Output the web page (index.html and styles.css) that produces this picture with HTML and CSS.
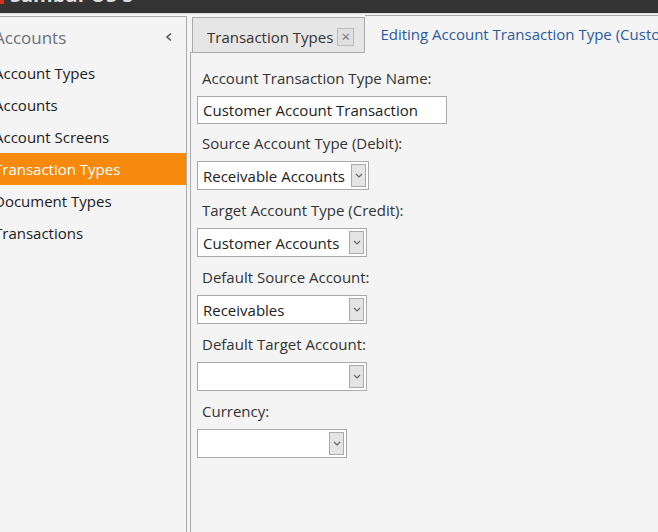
FILE: index.html
```html
<!DOCTYPE html>
<html lang="en">
<head>
  <meta charset="UTF-8">
  <title>Account Transaction Types</title>
  <link rel="stylesheet" href="styles.css">
</head>
<body>

  <div class="titlebar">
    <span class="logo"></span>
    <span class="title">SambaPOS 5</span>
  </div>

  <div class="main">
    <aside class="sidebar">
      <div class="side-head">
        <span>Accounts</span>
        <svg class="collapse" width="8" height="10" viewBox="0 0 8 10"><polyline points="6,1.5 2,5 6,8.5" fill="none" stroke="#555" stroke-width="1.6"/></svg>
      </div>
      <ul class="menu">
        <li>Account Types</li>
        <li>Accounts</li>
        <li>Account Screens</li>
        <li class="selected">Transaction Types</li>
        <li>Document Types</li>
        <li>Transactions</li>
      </ul>
    </aside>

    <section class="workspace">
      <div class="tabs">
        <div class="tab">Transaction Types <span class="close">&times;</span></div>
        <div class="tab active">Editing Account Transaction Type (Customer Account Transaction)</div>
      </div>

      <div class="panel">
        <form class="editor">
          <label>Account Transaction Type Name:</label>
          <div class="textbox">Customer Account Transaction</div>

          <label>Source Account Type (Debit):</label>
          <div class="combo debit"><span>Receivable Accounts</span><i class="drop"><svg width="8" height="5" viewBox="0 0 8 5"><polyline points="1,1 4,4 7,1" fill="none" stroke="#666" stroke-width="1.2"/></svg></i></div>

          <label>Target Account Type (Credit):</label>
          <div class="combo"><span>Customer Accounts</span><i class="drop"><svg width="8" height="5" viewBox="0 0 8 5"><polyline points="1,1 4,4 7,1" fill="none" stroke="#666" stroke-width="1.2"/></svg></i></div>

          <label>Default Source Account:</label>
          <div class="combo"><span>Receivables</span><i class="drop"><svg width="8" height="5" viewBox="0 0 8 5"><polyline points="1,1 4,4 7,1" fill="none" stroke="#666" stroke-width="1.2"/></svg></i></div>

          <label>Default Target Account:</label>
          <div class="combo"><span></span><i class="drop"><svg width="8" height="5" viewBox="0 0 8 5"><polyline points="1,1 4,4 7,1" fill="none" stroke="#666" stroke-width="1.2"/></svg></i></div>

          <label>Currency:</label>
          <div class="combo currency"><span></span><i class="drop"><svg width="8" height="5" viewBox="0 0 8 5"><polyline points="1,1 4,4 7,1" fill="none" stroke="#666" stroke-width="1.2"/></svg></i></div>
        </form>
      </div>
    </section>
  </div>

</body>
</html>
```

FILE: styles.css
```css
body {
  margin: 0;
  font-family: 'Open Sans', 'Noto Sans', sans-serif;
  background-color: #f4f4f4;
  color: #333;
  overflow: hidden;
}

.titlebar {
  height: 13px;
  background-color: #333;
  overflow: hidden;
  display: flex;
  align-items: flex-start;
  border-bottom: 1px solid #ddd;
}

.logo {
  width: 4px;
  height: 4px;
  background-color: #d8321e;
}

.title {
  margin-left: 6px;
  margin-top: -17px;
  font-size: 20px;
  line-height: 24px;
  font-weight: bold;
  color: #ddd;
}

.main {
  display: flex;
  margin-top: 1px;
  height: calc(100vh - 15px);
}

.sidebar {
  width: 197px;
  margin-left: -11px;
  margin-top: 1px;
  border-top: 1px solid #aaa;
  border-right: 1px solid #aaa;
  background-color: #f4f4f4;
}

.side-head {
  height: 40px;
  display: flex;
  align-items: center;
  justify-content: space-between;
  padding-left: 5px;
  padding-right: 13px;
  font-size: 17px;
  color: #6b6f7a;
}

.menu {
  list-style: none;
  margin: 0;
  padding: 0;
}

.menu li {
  height: 32px;
  line-height: 32px;
  padding-left: 5px;
  font-size: 15px;
  color: #1b1b22;
}

.menu li.selected {
  background-color: #f78a0d;
  color: white;
}

.workspace {
  flex: 1;
  min-width: 0;
  margin-left: 3px;
  display: flex;
  flex-direction: column;
}

.tabs {
  display: flex;
  align-items: flex-end;
  height: 37px;
  border-bottom: 1px solid #aaa;
  padding-left: 2px;
}

.tab {
  box-sizing: border-box;
  height: 35px;
  display: flex;
  align-items: center;
  padding: 4px 10px 0 14px;
  border: 1px solid #aaa;
  border-bottom: none;
  background-color: #e6e6e6;
  font-size: 15px;
  color: #333;
  white-space: nowrap;
}

.close {
  box-sizing: border-box;
  display: inline-block;
  width: 17px;
  height: 18px;
  margin-left: 4px;
  border: 1px solid #bbb;
  background-color: #e0e0e0;
  font-size: 15px;
  line-height: 15px;
  text-align: center;
  color: #6a7588;
}

.tab.active {
  height: 38px;
  margin-bottom: -1px;
  padding: 0 0 2px 15px;
  border-left: none;
  border-right: none;
  background-color: #f4f4f4;
  color: #2c5aa0;
  overflow: hidden;
  min-width: 0;
  flex: 1;
}

.panel {
  flex: 1;
  border-left: 1px solid #aaa;
}

.editor {
  display: flex;
  flex-direction: column;
  align-items: flex-start;
  padding: 15px 0 0 6px;
}

.editor label {
  height: 20px;
  line-height: 20px;
  padding-left: 5px;
  margin-bottom: 8px;
  font-size: 15px;
  color: #333;
}

.textbox, .combo {
  box-sizing: border-box;
  height: 28px;
  margin-bottom: 9px;
  border: 1px solid #aaa;
  background-color: white;
  font-size: 15px;
  color: #222;
}

.textbox {
  width: 250px;
  line-height: 26px;
  padding-left: 5px;
}

.combo {
  width: 170px;
  height: 29px;
  margin-bottom: 10px;
  display: flex;
  align-items: center;
  justify-content: space-between;
  padding: 2px 2px 2px 5px;
}

.combo.debit {
  width: 172px;
}

.combo.currency {
  width: 150px;
}

.drop {
  box-sizing: border-box;
  width: 15px;
  height: 100%;
  display: flex;
  align-items: center;
  justify-content: center;
  border: 1px solid #aaa;
  background-color: #e4e4e4;
}
```
